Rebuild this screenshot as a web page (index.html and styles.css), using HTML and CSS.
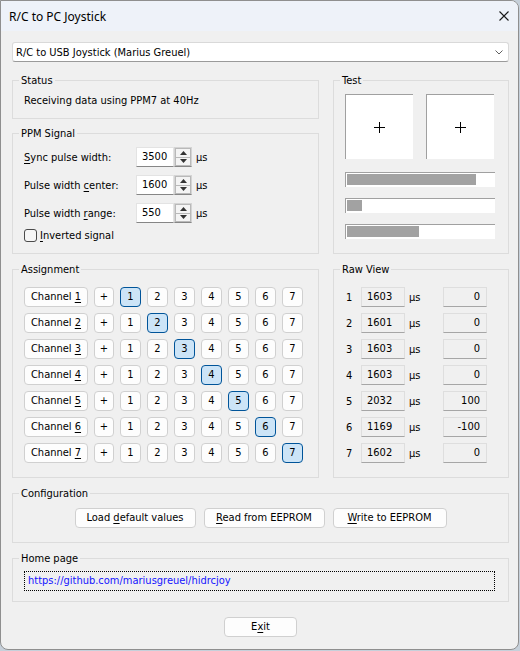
FILE: index.html
```html
<!DOCTYPE html>
<html>
<head>
<meta charset="utf-8">
<link rel="stylesheet" href="styles.css">
</head>
<body>
<div class="window">
  <div class="titlebar">
    <span class="title">R/C to PC Joystick</span>
    <svg class="close" width="10" height="10" viewBox="0 0 10 10"><path d="M0.5 0.5L9.5 9.5M9.5 0.5L0.5 9.5" stroke="#1a1a1a" stroke-width="1.1" fill="none"/></svg>
  </div>
  <div class="content">
    <div class="combo">
      <span>R/C to USB Joystick (Marius Greuel)</span>
      <svg width="8" height="5" viewBox="0 0 8 5"><path d="M0.5 0.5L4 4L7.5 0.5" fill="none" stroke="#606060"/></svg>
    </div>

    <div class="grid">
      <div class="col">
        <div class="group status">
          <div class="legend">Status</div>
          <div class="status-text">Receiving data using PPM7 at 40Hz</div>
        </div>
        <div class="group ppm">
          <div class="legend">PPM Signal</div>
          <div class="ppm-rows">
            <div class="spin-row">
              <span class="spin-label"><u>S</u>ync pulse width:</span>
              <span class="edit">3500</span>
              <span class="spin"><span class="spin-btn"><svg width="7" height="4" viewBox="0 0 7 4"><path d="M3.5 0L7 4H0Z" fill="#333"/></svg></span><span class="spin-btn"><svg width="7" height="4" viewBox="0 0 7 4"><path d="M0 0H7L3.5 4Z" fill="#333"/></svg></span></span>
              <span class="unit">µs</span>
            </div>
            <div class="spin-row">
              <span class="spin-label">Pulse width <u>c</u>enter:</span>
              <span class="edit">1600</span>
              <span class="spin"><span class="spin-btn"><svg width="7" height="4" viewBox="0 0 7 4"><path d="M3.5 0L7 4H0Z" fill="#333"/></svg></span><span class="spin-btn"><svg width="7" height="4" viewBox="0 0 7 4"><path d="M0 0H7L3.5 4Z" fill="#333"/></svg></span></span>
              <span class="unit">µs</span>
            </div>
            <div class="spin-row">
              <span class="spin-label">Pulse width <u>r</u>ange:</span>
              <span class="edit">550</span>
              <span class="spin"><span class="spin-btn"><svg width="7" height="4" viewBox="0 0 7 4"><path d="M3.5 0L7 4H0Z" fill="#333"/></svg></span><span class="spin-btn"><svg width="7" height="4" viewBox="0 0 7 4"><path d="M0 0H7L3.5 4Z" fill="#333"/></svg></span></span>
              <span class="unit">µs</span>
            </div>
            <div class="check-row">
              <span class="checkbox"></span>
              <span><u>I</u>nverted signal</span>
            </div>
          </div>
        </div>
      </div>

      <div class="group test">
        <div class="legend">Test</div>
        <div class="test-boxes">
          <div class="stick"><svg width="11" height="11" viewBox="0 0 11 11"><path d="M5.5 0V11M0 5.5H11" stroke="#000" fill="none"/></svg></div>
          <div class="stick"><svg width="11" height="11" viewBox="0 0 11 11"><path d="M5.5 0V11M0 5.5H11" stroke="#000" fill="none"/></svg></div>
        </div>
        <div class="bars">
          <div class="bar"><div class="fill" style="width:129px"></div></div>
          <div class="bar"><div class="fill" style="width:15px"></div></div>
          <div class="bar"><div class="fill" style="width:72px"></div></div>
        </div>
      </div>

      <div class="group assign">
        <div class="legend">Assignment</div>
        <div class="assign-grid">
          <span class="btn">Channel <u>1</u></span><span class="btn">+</span><span class="btn sel">1</span><span class="btn">2</span><span class="btn">3</span><span class="btn">4</span><span class="btn">5</span><span class="btn">6</span><span class="btn">7</span>
          <span class="btn">Channel <u>2</u></span><span class="btn">+</span><span class="btn">1</span><span class="btn sel">2</span><span class="btn">3</span><span class="btn">4</span><span class="btn">5</span><span class="btn">6</span><span class="btn">7</span>
          <span class="btn">Channel <u>3</u></span><span class="btn">+</span><span class="btn">1</span><span class="btn">2</span><span class="btn sel">3</span><span class="btn">4</span><span class="btn">5</span><span class="btn">6</span><span class="btn">7</span>
          <span class="btn">Channel <u>4</u></span><span class="btn">+</span><span class="btn">1</span><span class="btn">2</span><span class="btn">3</span><span class="btn sel">4</span><span class="btn">5</span><span class="btn">6</span><span class="btn">7</span>
          <span class="btn">Channel <u>5</u></span><span class="btn">+</span><span class="btn">1</span><span class="btn">2</span><span class="btn">3</span><span class="btn">4</span><span class="btn sel">5</span><span class="btn">6</span><span class="btn">7</span>
          <span class="btn">Channel <u>6</u></span><span class="btn">+</span><span class="btn">1</span><span class="btn">2</span><span class="btn">3</span><span class="btn">4</span><span class="btn">5</span><span class="btn sel">6</span><span class="btn">7</span>
          <span class="btn">Channel <u>7</u></span><span class="btn">+</span><span class="btn">1</span><span class="btn">2</span><span class="btn">3</span><span class="btn">4</span><span class="btn">5</span><span class="btn">6</span><span class="btn sel">7</span>
        </div>
      </div>

      <div class="group raw">
        <div class="legend">Raw View</div>
        <div class="raw-grid">
          <span class="num">1</span><span class="val">1603</span><span class="unit2">µs</span><span class="val r">0</span>
          <span class="num">2</span><span class="val">1601</span><span class="unit2">µs</span><span class="val r">0</span>
          <span class="num">3</span><span class="val">1603</span><span class="unit2">µs</span><span class="val r">0</span>
          <span class="num">4</span><span class="val">1603</span><span class="unit2">µs</span><span class="val r">0</span>
          <span class="num">5</span><span class="val">2032</span><span class="unit2">µs</span><span class="val r">100</span>
          <span class="num">6</span><span class="val">1169</span><span class="unit2">µs</span><span class="val r">-100</span>
          <span class="num">7</span><span class="val">1602</span><span class="unit2">µs</span><span class="val r">0</span>
        </div>
      </div>
    </div>

    <div class="group config">
      <div class="legend">Configuration</div>
      <div class="config-row">
        <span class="btn w-load">Load <u>d</u>efault values</span>
        <span class="btn w-read"><u>R</u>ead from EEPROM</span>
        <span class="btn w-write"><u>W</u>rite to EEPROM</span>
      </div>
    </div>

    <div class="group home">
      <div class="legend">Home page</div>
      <div class="link-box">https://github.com/mariusgreuel/hidrcjoy</div>
    </div>

    <div class="exit-row">
      <span class="btn w-exit">E<u>x</u>it</span>
    </div>
  </div>
</div>
</body>
</html>
```

FILE: styles.css
```css
* { box-sizing: border-box; }
html, body { margin: 0; padding: 0; }
body {
  width: 520px;
  height: 651px;
  overflow: hidden;
  background: #c6d0da;
  font-family: "DejaVu Sans Condensed", "DejaVu Sans", sans-serif;
  font-stretch: condensed;
  font-size: 11px;
  color: #000;
}
u { text-decoration: underline; text-underline-offset: 2px; }

.window {
  width: 519px;
  height: 650px;
  background: #f0f0f0;
  border: 1px solid #8f8f8f;
  border-radius: 0 8px 8px 8px;
  overflow: hidden;
  display: flex;
  flex-direction: column;
}

.titlebar {
  height: 30px;
  flex: none;
  background: #eef2f9;
  display: flex;
  align-items: center;
  justify-content: space-between;
  padding: 0 9px 0 8px;
}
.title {
  font-family: "Noto Sans", sans-serif;
  font-stretch: normal;
  font-size: 12px;
}

.content { padding: 11px 9px 0 11px; }

.combo {
  height: 20px;
  background: #fff;
  border: 1px solid #d9d9d9;
  border-bottom-color: #9a9a9a;
  border-radius: 3px;
  display: flex;
  align-items: center;
  justify-content: space-between;
  padding: 0 5px 0 3px;
}

.grid {
  margin-top: 18px;
  display: grid;
  grid-template-columns: 307px 176px;
  column-gap: 14px;
  row-gap: 15px;
}
.col { display: flex; flex-direction: column; gap: 14px; }

.group { border: 1px solid #dcdcdc; }
.legend {
  width: fit-content;
  margin: -7px 0 0 6px;
  padding: 0 2px;
  height: 13px;
  line-height: 13px;
  background: #f0f0f0;
}
.status { height: 39px; }
.ppm { height: 121px; }
.test { height: 174px; }
.assign, .raw { height: 209px; }
.config { margin-top: 15px; height: 50px; }
.home { margin-top: 15px; height: 44px; }

.status-text { margin: 7px 0 0 11px; line-height: 13px; }

.ppm-rows { margin: 7px 0 0 11px; }
.spin-row { display: flex; align-items: center; height: 20px; }
.spin-row + .spin-row { margin-top: 8px; }
.spin-label { width: 112px; }
.edit {
  width: 38px;
  height: 20px;
  background: #fff;
  border: 1px solid #e3e3e3;
  border-bottom-color: #868686;
  padding-left: 5px;
  line-height: 18px;
}
.spin {
  width: 18px;
  height: 20px;
  display: flex;
  flex-direction: column;
  border: 1px solid #d4d4d4;
  border-bottom-color: #868686;
  background: #fff;
}
.spin-btn {
  flex: 1;
  display: flex;
  align-items: center;
  justify-content: center;
  background: #f4f4f4;
  border: 1px solid #b9b9b9;
}
.spin-btn + .spin-btn { border-top: none; }
.unit { margin-left: 4px; }
.check-row { display: flex; align-items: center; height: 14px; margin-top: 5px; }
.checkbox {
  width: 13px;
  height: 13px;
  border: 1px solid #4a4a4a;
  border-radius: 3px;
  background: #f6f6f6;
  margin-right: 3px;
}

.test-boxes { margin: 7px 0 0 11px; display: flex; gap: 13px; }
.stick {
  width: 68px;
  height: 65px;
  background: #fff;
  border-top: 1px solid #a0a0a0;
  border-left: 1px solid #a0a0a0;
  display: flex;
  align-items: center;
  justify-content: center;
}
.bars { margin: 13px 0 0 11px; display: flex; flex-direction: column; gap: 11px; }
.bar {
  width: 150px;
  height: 15px;
  background: #fff;
  border-top: 1px solid #a0a0a0;
  border-left: 1px solid #a0a0a0;
  padding: 1px;
}
.fill { height: 11px; background: #a2a2a2; }

.assign-grid {
  margin: 11px 0 0 11px;
  display: grid;
  grid-template-columns: 64px 20px repeat(7, 21px);
  column-gap: 6px;
  row-gap: 6px;
}
.btn {
  display: block;
  height: 20px;
  line-height: 18px;
  text-align: center;
  background: #fdfdfd;
  border: 1px solid #d0d0d0;
  border-radius: 4px;
  white-space: nowrap;
}
.btn.sel { background: #cce4f7; border-color: #005499; }

.raw-grid {
  margin: 11px 0 0 12px;
  display: grid;
  grid-template-columns: 15px 44px 38px 44px;
  grid-auto-rows: 20px;
  row-gap: 6px;
  align-items: center;
}
.val {
  height: 20px;
  line-height: 18px;
  background: #f0f0f0;
  border: 1px solid #dedede;
  border-bottom-color: #a6a6a6;
  padding-left: 5px;
}
.val.r { text-align: right; padding: 0 6px 0 0; }
.unit2 { padding-left: 4px; }

.config-row { margin-top: 8px; display: flex; justify-content: center; gap: 8px; }
.w-load { width: 121px; }
.w-read { width: 121px; }
.w-write { width: 114px; }

.link-box {
  margin: 6px 0 0 11px;
  width: 471px;
  height: 20px;
  border: 1px dotted #000;
  padding-left: 3px;
  line-height: 18px;
  color: #1414ff;
}

.exit-row { margin-top: 15px; display: flex; justify-content: center; }
.w-exit { width: 73px; }
```
